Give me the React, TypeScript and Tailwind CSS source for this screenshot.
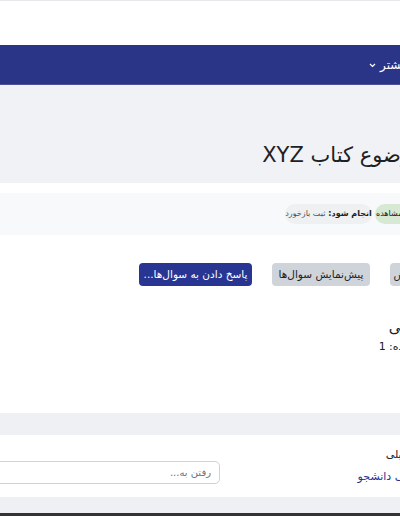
import React from "react";

const font = { fontFamily: '"DejaVu Sans", "Noto Sans", sans-serif' };

export default function App() {
  return (
    <div className="w-[400px] h-[516px] overflow-hidden bg-white" style={font}>
      <div dir="rtl" className="w-[500px] flex flex-col">
        {/* top header */}
        <div className="h-[45px] border-t border-[#e5e7eb] bg-white" />
        {/* nav bar */}
        <div className="h-[40px] bg-[#2b3587] border-b border-[#4a529a] flex items-center pr-[92px] text-white text-[12px]">
          <span>بیشتر</span>
          <svg width="7" height="5" viewBox="0 0 7 5" className="mr-[4px] mt-[2px]">
            <path d="M1 1 L3.5 3.5 L6 1" stroke="white" strokeWidth="1.2" fill="none" />
          </svg>
        </div>
        {/* page header */}
        <div className="h-[98px] bg-[#f1f2f5] flex items-end pb-[17px] pr-[77px]">
          <h1 className="text-[21px] text-[#1d2125] leading-none">موضوع کتاب XYZ</h1>
        </div>
        {/* main */}
        <div className="bg-white h-[230px] flex flex-col">
          <div className="mt-[10px] h-[42px] bg-[#f8f9fa] flex items-center pr-[45px] gap-[3px]">
            <span className="h-[20px] w-[80px] justify-start pr-[6px] rounded-full bg-[#d7e9d3] text-[#1d2125] text-[8px] flex items-center gap-[3px] whitespace-nowrap">
              <b>انجام شده:</b>
              <span>مشاهده</span>
            </span>
            <span className="h-[20px] w-[87px] justify-center rounded-full bg-[#eef0f2] text-[#495057] text-[8px] flex items-center gap-[3px] whitespace-nowrap">
              <b className="text-[#1d2125]">انجام شود:</b>
              <span>ثبت بازخورد</span>
            </span>
          </div>
          <div className="mt-[28px] flex items-center gap-[20px] pr-[70px]">
            <button className="h-[23px] w-[40px] rounded-[4px] bg-[#ced4da] text-[10.5px] text-[#1d2125] whitespace-nowrap overflow-hidden">
              ویرایش
            </button>
            <button className="h-[23px] w-[98px] rounded-[4px] bg-[#ced4da] text-[10.5px] text-[#1d2125] whitespace-nowrap">
              پیش‌نمایش سوال‌ها
            </button>
            <button className="h-[23px] w-[113px] rounded-[4px] bg-[#283593] text-[10.5px] text-white whitespace-nowrap">
              پاسخ دادن به سوال‌ها...
            </button>
          </div>
          <div className="mt-[34px] pr-[51px] text-[15px] text-[#1d2125] leading-none whitespace-nowrap">مرور کلی</div>
          <div className="mt-[4px] pr-[10px] text-[11px] text-[#1d2125] whitespace-nowrap">پاسخ‌های ارسال شده: 1</div>
        </div>
        {/* activity navigation */}
        <div className="h-[22px] bg-[#eef0f3]" />
        <div className="h-[62px] bg-white flex items-center pr-[58px]">
          <div className="flex flex-col gap-[5px] text-[11px] whitespace-nowrap w-[90px]">
            <span className="text-[#1d2125]">فعالیت قبلی</span>
            <a className="text-[#283593]">پیام صوتی دانشجو</a>
          </div>
          <div className="mr-auto ml-[-10px] w-[230px] h-[23px] border border-[#ced4da] rounded-[5px] flex items-center px-[8px] text-[10px] text-[#6a737b] mt-[12px] whitespace-nowrap">
            رفتن به...
          </div>
        </div>
        <div className="h-[16px] bg-[#eef0f3]" />
        <div className="h-[3px] bg-[#333]" />
      </div>
    </div>
  );
}
